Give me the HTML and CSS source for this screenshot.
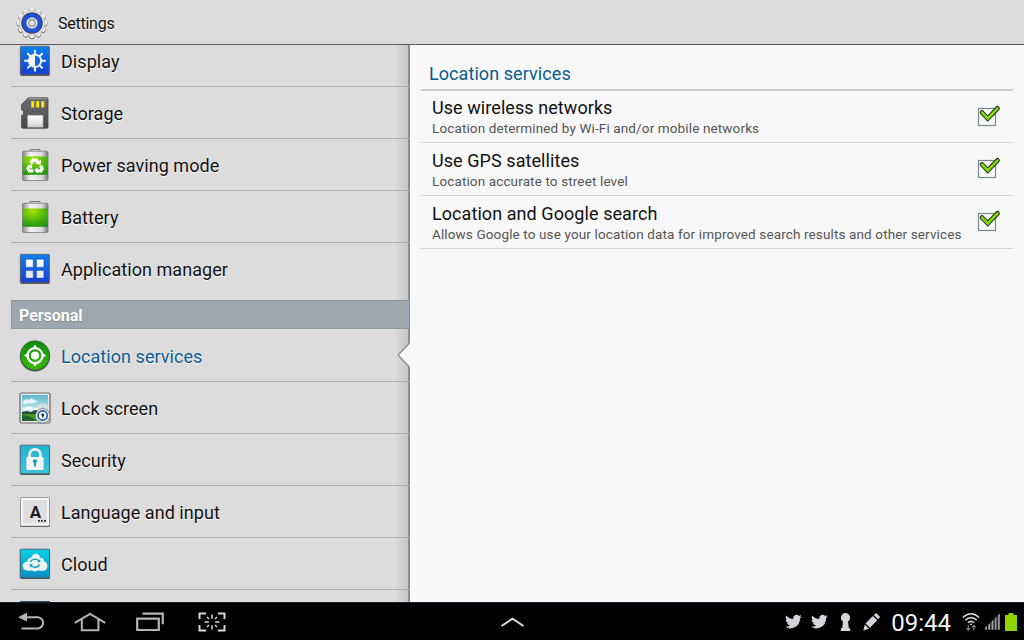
FILE: index.html
```html
<!DOCTYPE html>
<html lang="en">
<head>
    <meta charset="UTF-8">
    <meta name="viewport" content="width=device-width, initial-scale=1.0">
    <title>Settings</title>
    <link rel="stylesheet" href="styles.css">
</head>
<body>

    <!-- gradients shared by the icons -->
    <svg class="defs" width="0" height="0">
        <defs>
            <linearGradient id="blue" x1="0" y1="0" x2="0" y2="1"><stop offset="0" stop-color="#0a80ee"/><stop offset="1" stop-color="#1a3fd0"/></linearGradient>
            <linearGradient id="metal" x1="0" y1="0" x2="1" y2="0"><stop offset="0" stop-color="#8a8a8a"/><stop offset=".3" stop-color="#f4f4f4"/><stop offset=".75" stop-color="#dcdcdc"/><stop offset="1" stop-color="#7c7c7c"/></linearGradient>
            <radialGradient id="green" cx=".4" cy=".15" r="1"><stop offset="0" stop-color="#a2e400"/><stop offset=".6" stop-color="#3fae10"/><stop offset="1" stop-color="#1e8a12"/></radialGradient>
            <linearGradient id="greenball" x1="0" y1="0" x2="0" y2="1"><stop offset="0" stop-color="#0d8a0c"/><stop offset="1" stop-color="#35bf08"/></linearGradient>
            <linearGradient id="cyan" x1="0" y1="0" x2="0" y2="1"><stop offset="0" stop-color="#08cfe6"/><stop offset="1" stop-color="#0b8fc4"/></linearGradient>
            <linearGradient id="aqua" x1="0" y1="0" x2="0" y2="1"><stop offset="0" stop-color="#22b4d4"/><stop offset="1" stop-color="#3fc2dc"/></linearGradient>
            <linearGradient id="paper" x1="0" y1="0" x2="0" y2="1"><stop offset="0" stop-color="#ffffff"/><stop offset="1" stop-color="#d4d4d4"/></linearGradient>
            <linearGradient id="sky" x1="0" y1="0" x2="0" y2="1"><stop offset="0" stop-color="#5cb8cc"/><stop offset="1" stop-color="#d8f2f5"/></linearGradient>
            <linearGradient id="card" x1="0" y1="0" x2="0" y2="1"><stop offset="0" stop-color="#6e6e6e"/><stop offset="1" stop-color="#474747"/></linearGradient>
        </defs>
    </svg>

    <header class="topo">
        <svg class="gear" width="34" height="34" viewBox="0 0 34 34">
            <circle cx="17" cy="17.600" r="12.800" fill="none" stroke="#777" stroke-width="5.600" stroke-linecap="round" stroke-dasharray=".01 6.692" pathLength="80.424"/>
            <circle cx="17" cy="17" r="12.800" fill="none" stroke="#f4f4f4" stroke-width="4.800" stroke-linecap="round" stroke-dasharray=".01 6.692" pathLength="80.424"/>
            <circle cx="17" cy="17" r="12.600" fill="#ececec" stroke="#aaa" stroke-width=".6"/>
            <circle cx="17" cy="17" r="10.800" fill="#4a4e5c"/>
            <circle cx="17" cy="17" r="10" fill="#1b3fae"/>
            <circle cx="17" cy="17" r="7.600" fill="none" stroke="#1f52dc" stroke-width="3.600"/>
            <circle cx="17" cy="17" r="5.600" fill="#f2f2f2" stroke="#8b8f9c" stroke-width=".7"/>
            <circle cx="17" cy="17" r="3.300" fill="#e4e4e4" stroke="#888" stroke-width="1.200"/>
        </svg>
        <h1>Settings</h1>
    </header>

    <main class="principal">
        <nav class="menu">
            <ul class="lista">
                <li class="item">
                    <svg class="icone" viewBox="0 0 32 32">
                        <rect x="1.500" y="2" width="29" height="29" rx="1" fill="#555"/>
                        <rect x="1.300" y="1.300" width="29" height="28.400" rx=".8" fill="url(#blue)" stroke="#665f60" stroke-width=".8"/>
                        <g stroke="#f5f5f5" stroke-width="2" stroke-linecap="round"><path d="M16 5.800v20M6 15.800h20M8.900 8.700l14.200 14.200M23.100 8.700L8.900 22.900"/></g>
                        <circle cx="16" cy="15.800" r="7.100" fill="#f5f5f5"/>
                        <path d="M16 10.600a5.200 5.200 0 0 1 0 10.400z" fill="#1765dd"/>
                    </svg>
                    <span>Display</span>
                </li>
                <li class="item">
                    <svg class="icone" viewBox="0 0 32 32">
                        <path d="M9.500.8H28q1 0 1 1V30q0 1.200-1 1.200H4q-1.400 0-1.400-1.200V18.500l2-1.200v-3.200l-2-1.400V7.500z" fill="url(#card)" stroke="#444" stroke-width=".8"/>
                        <path d="M9.800 1.600H28" stroke="#aaa" stroke-width=".8"/>
                        <path d="M12.200 4.200h3v6.400h-3zM17.200 4.200h3v6.400h-3zM22.200 4.200h3v6.400h-3z" fill="#f5e414"/>
                        <path d="M8.500 30.300V19q0-.8.8-.8h14q.8 0 .8.8v11.300z" fill="url(#paper)" stroke="#999" stroke-width=".6"/>
                    </svg>
                    <span>Storage</span>
                </li>
                <li class="item">
                    <svg class="icone" viewBox="0 0 32 32">
                        <path d="M11 3.500V1.300q0-1 1-1h8q1 0 1 1v2.200" fill="#ddd" stroke="#6b6b6b"/>
                        <rect x="3.500" y="2.200" width="25.500" height="29.300" rx="1.500" fill="url(#metal)" stroke="#777" stroke-width=".8"/>
                        <rect x="3.800" y="7.500" width="24.900" height="18.300" fill="url(#green)"/>
                        <g fill="none" stroke="#fff" stroke-width="3.400"><path d="M11.800 14.500l2.200-3.400h3.400l1.700 2.700"/><path d="M21.600 16.500l1.600 3.100-1.500 2.300h-3.700"/><path d="M14.200 21.900h-3.700l-1.400-2.300 1.500-2.600"/></g>
                        <path d="M16.300 14.700l5.400 1.100.3-5zM18.600 18.300v6.200l-3.500-3zM8 17l4.500-1.700 1 4.400z" fill="#fff"/>
                    </svg>
                    <span>Power saving mode</span>
                </li>
                <li class="item">
                    <svg class="icone" viewBox="0 0 32 32">
                        <path d="M11 3.500V1.300q0-1 1-1h8q1 0 1 1v2.200" fill="#ddd" stroke="#6b6b6b"/>
                        <rect x="3.500" y="2.200" width="25.500" height="29.300" rx="1.500" fill="url(#metal)" stroke="#777" stroke-width=".8"/>
                        <rect x="3.800" y="7.500" width="24.900" height="18.300" fill="url(#green)"/>
                    </svg>
                    <span>Battery</span>
                </li>
                <li class="item ultimo">
                    <svg class="icone" viewBox="0 0 32 32">
                        <rect x="1.500" y="2" width="29" height="29" rx="1" fill="#555"/>
                        <rect x="1.300" y="1.300" width="29" height="28.400" rx=".8" fill="url(#blue)" stroke="#665f60" stroke-width=".8"/>
                        <g fill="#fff" stroke="#174fb5" stroke-width=".5"><path d="M6.800 6.300h7.400v7.900H6.800zM17.500 6.300h7.400v7.900h-7.400z"/><path fill="#e9e9e9" d="M6.800 17.400h7.400v7.700H6.800zM17.500 17.400h7.400v7.700h-7.400z"/></g>
                    </svg>
                    <span>Application manager</span>
                </li>
            </ul>

            <h2 class="grupo">Personal</h2>

            <ul class="lista">
                <li class="item ativo">
                    <svg class="icone" viewBox="0 0 32 32">
                        <circle cx="16" cy="16.200" r="15.200" fill="#4b5549"/>
                        <circle cx="16" cy="15.300" r="14.600" fill="url(#greenball)" stroke="#48664a" stroke-width=".7"/>
                        <circle cx="16" cy="15.600" r="7.500" fill="none" stroke="#fff" stroke-width="2.300"/>
                        <circle cx="16" cy="15.600" r="4.100" fill="#f7fff4"/>
                        <path d="M13 9l3-4.600L19 9zM13 22.200l3 4.600 3-4.600zM9.500 12.600l-4.600 3 4.600 3zM22.500 12.600l4.600 3-4.600 3z" fill="#fff"/>
                    </svg>
                    <span>Location services</span>
                    <svg class="seta" width="13" height="26" viewBox="0 0 13 26"><path d="M13 1L1.500 13 13 25z" fill="#f8f8f8"/><path d="M12 1.500L1.500 12.500q-.5.500 0 1L12 24.500" fill="none" stroke="#8b8b8b" stroke-width="1.200"/></svg>
                </li>
                <li class="item">
                    <svg class="icone" viewBox="0 0 32 32">
                        <rect x="1" y="1" width="30" height="30" rx="1.500" fill="#e8e8e8" stroke="#666" stroke-width="1.200"/>
                        <path d="M3 3h26v18H3z" fill="url(#sky)"/>
                        <path d="M4 9q3-3 6-1 2-3 5 0l4 1q-5 3-9 2-4 2-6 0zM4 16q6-3 12 0l6-1v3H4z" fill="#fff" opacity=".8"/>
                        <path d="M3 20l5-1 4 1 4-2 5 1 8-2v5H3z" fill="#214c38"/><path d="M3 22h26v7H3z" fill="#4a9625"/><path d="M3 23q9 0 14 6H3z" fill="#1f6429"/>
                        <path d="M19.500 20v-3q0-4 4-4t4 4v3" fill="none" stroke="#ddd" stroke-width="2.600"/>
                        <circle cx="23.700" cy="23.800" r="7.300" fill="#e0e0e0" stroke="#777" stroke-width=".8"/>
                        <circle cx="23.700" cy="23.500" r="4.600" fill="#fff" stroke="#1c62b4" stroke-width="1.600"/>
                        <circle cx="23.700" cy="23" r="1.400" fill="#222"/><path d="M23.200 23.500h1l.4 2h-1.800z" fill="#333"/>
                    </svg>
                    <span>Lock screen</span>
                </li>
                <li class="item">
                    <svg class="icone" viewBox="0 0 32 32">
                        <rect x="1.200" y="2" width="29.600" height="29" rx="1" fill="#48585e"/>
                        <rect x="1.200" y="1.200" width="29.400" height="28.600" rx=".8" fill="url(#aqua)" stroke="#53666c"/>
                        <path d="M10.500 14v-3.200a5.500 5.500 0 0 1 11 0V14" fill="none" stroke="#f4f4f4" stroke-width="2.800"/>
                        <rect x="7.400" y="13" width="17.200" height="13" rx="1" fill="#f3f3f3"/>
                        <circle cx="16" cy="17.300" r="2.100" fill="#189dbc"/><path d="M15 18h2v4.500h-2z" fill="#189dbc"/>
                    </svg>
                    <span>Security</span>
                </li>
                <li class="item">
                    <svg class="icone" viewBox="0 0 32 32">
                        <rect x="1.200" y="1.200" width="29.600" height="29.800" rx="1.500" fill="#666"/>
                        <rect x="1.800" y="1.800" width="28.400" height="27.900" rx="1" fill="#f7f7f7"/>
                        <rect x="4" y="4" width="24" height="23.500" fill="#dfdfdf"/>
                        <text class="letra" x="16.400" y="21.800" text-anchor="middle">A</text>
                        <path d="M19 24h1.800v1.800H19zM22 24h1.800v1.800H22zM25 24h1.800v1.800H25z" fill="#222"/>
                    </svg>
                    <span>Language and input</span>
                </li>
                <li class="item">
                    <svg class="icone" viewBox="0 0 32 32">
                        <rect x="1.200" y="2" width="29.600" height="29" rx="1" fill="#3f525a"/>
                        <rect x="1.200" y="1.200" width="29.400" height="28.600" rx=".8" fill="url(#cyan)" stroke="#466670"/>
                        <path d="M9 22.800q-5.300-.4-5.300-4.800 0-4 4.600-4.600.6-3.700 3.900-3.600 1.500-4 4.600-4t4.600 4q3.500.3 3.700 3.700 3.300.9 3.300 4.500 0 4.500-4.900 4.800-3 0-4-.5-3.500 2.200-7 0-1.500.5-3.500.5z" fill="#f1f4f5"/>
                        <g fill="none" stroke="#1ba5c8" stroke-width="1.500"><path d="M11.300 13.800q1.600-2.500 4.700-2.500 2.500 0 4 1.700M20.700 16.500q-1.600 2.700-4.700 2.700-2.500 0-4-1.800"/></g>
                        <path d="M21.300 11v3.300H18zM10.700 19.400v-3.300H14z" fill="#1ba5c8"/>
                    </svg>
                    <span>Cloud</span>
                </li>
                <li class="item">
                    <svg class="icone" viewBox="0 0 32 32"><rect x="1.200" y="1.200" width="29.600" height="29" fill="#0d2a33"/></svg>
                </li>
            </ul>
        </nav>

        <section class="painel">
            <h2 class="titulo">Location services</h2>
            <div class="opcao">
                <div class="texto">
                    <h3>Use wireless networks</h3>
                    <p>Location determined by Wi-Fi and/or mobile networks</p>
                </div>
                <svg class="check" width="24" height="22" viewBox="0 0 24 22"><rect x="1.500" y="3.500" width="17" height="17" fill="#fafafa" stroke="#78898f" stroke-width="1.200"/><path d="M5 7.500l5.700 6L20.500 3.300" fill="none" stroke="#17200d" stroke-width="4.600" stroke-linecap="round"/><path d="M5 7.500l5.700 6L20.500 3.300" fill="none" stroke="#80dc0c" stroke-width="2.600" stroke-linecap="round"/></svg>
            </div>
            <div class="opcao">
                <div class="texto">
                    <h3>Use GPS satellites</h3>
                    <p>Location accurate to street level</p>
                </div>
                <svg class="check" width="24" height="22" viewBox="0 0 24 22"><rect x="1.500" y="3.500" width="17" height="17" fill="#fafafa" stroke="#78898f" stroke-width="1.200"/><path d="M5 7.500l5.700 6L20.500 3.300" fill="none" stroke="#17200d" stroke-width="4.600" stroke-linecap="round"/><path d="M5 7.500l5.700 6L20.500 3.300" fill="none" stroke="#80dc0c" stroke-width="2.600" stroke-linecap="round"/></svg>
            </div>
            <div class="opcao">
                <div class="texto">
                    <h3>Location and Google search</h3>
                    <p>Allows Google to use your location data for improved search results and other services</p>
                </div>
                <svg class="check" width="24" height="22" viewBox="0 0 24 22"><rect x="1.500" y="3.500" width="17" height="17" fill="#fafafa" stroke="#78898f" stroke-width="1.200"/><path d="M5 7.500l5.700 6L20.500 3.300" fill="none" stroke="#17200d" stroke-width="4.600" stroke-linecap="round"/><path d="M5 7.500l5.700 6L20.500 3.300" fill="none" stroke="#80dc0c" stroke-width="2.600" stroke-linecap="round"/></svg>
            </div>
        </section>
    </main>

    <footer class="barra">
        <div class="botoes">
            <!-- back -->
            <svg width="26" height="20" viewBox="0 0 26 20"><path d="M7 5.200h12.500a5.200 5.200 0 0 1 0 11.200H3.500" fill="none" stroke="#b4b4b4" stroke-width="2"/><path d="M0 5.300L9 .5v9z" fill="#b4b4b4"/></svg>
            <!-- home -->
            <svg width="32" height="20" viewBox="0 0 32 20"><path d="M.8 10.800L16 1.800l15.200 9M7.800 7.500v10.700h16.600V7.500" fill="none" stroke="#b4b4b4" stroke-width="2"/></svg>
            <!-- recent apps -->
            <svg width="28" height="20" viewBox="0 0 28 20"><path d="M1.200 6.600h21.600v11.400H1.200zM6.500 1.700h20.300v10.600" fill="none" stroke="#b4b4b4" stroke-width="2.200"/></svg>
            <!-- screen capture -->
            <svg class="captura" width="28" height="20" viewBox="0 0 28 20"><path d="M1.500 7V1.500H8M20 1.500h6.500V7M1.500 13v5.500H8M20 18.500h6.500V13" fill="none" stroke="#d8d8d8" stroke-width="2"/><path d="M14 2.500v4.300M14 13.200v4.300M6.500 10h4.300M17.200 10h4.300M9 5l2 2M19 5l-2 2M9 15l2-2M19 15l-2-2" stroke="#d8d8d8" stroke-width="1.500"/></svg>
        </div>
        <svg class="sobe" width="24" height="10" viewBox="0 0 24 10"><path d="M1.500 9l11-7.300 11 7.300" fill="none" stroke="#e2e2e2" stroke-width="1.800"/></svg>
        <div class="status">
            <div class="avisos">
                <svg width="17" height="15" viewBox="0 0 24 21"><path d="M23.600 3.300a9 9 0 0 1-2.700.8A4.800 4.800 0 0 0 23 1.400a9 9 0 0 1-3.100 1.200 4.800 4.800 0 0 0-8.200 4.400A13.700 13.700 0 0 1 1.800 2a4.800 4.800 0 0 0 1.500 6.400 4.700 4.700 0 0 1-2.200-.6 4.800 4.800 0 0 0 3.900 4.800 5 5 0 0 1-2.200.1 4.800 4.800 0 0 0 4.500 3.300A9.700 9.700 0 0 1 .2 18a13.700 13.700 0 0 0 21-12.200 9.500 9.500 0 0 0 2.400-2.500z" fill="#d6d3da"/></svg>
                <svg width="17" height="15" viewBox="0 0 24 21"><path d="M23.600 3.300a9 9 0 0 1-2.700.8A4.800 4.800 0 0 0 23 1.400a9 9 0 0 1-3.100 1.200 4.800 4.800 0 0 0-8.200 4.400A13.700 13.700 0 0 1 1.800 2a4.800 4.800 0 0 0 1.500 6.400 4.700 4.700 0 0 1-2.200-.6 4.800 4.800 0 0 0 3.900 4.800 5 5 0 0 1-2.200.1 4.800 4.800 0 0 0 4.500 3.300A9.700 9.700 0 0 1 .2 18a13.700 13.700 0 0 0 21-12.200 9.500 9.500 0 0 0 2.400-2.500z" fill="#d6d3da"/></svg>
                <svg class="chave" width="11" height="18" viewBox="0 0 11 18"><circle cx="5.500" cy="4.700" r="4.600" fill="#d6d3da"/><path d="M3.200 7h4.600l1 8 1.400.6V18H.8v-2.400l1.400-.6z" fill="#d6d3da"/></svg>
                <svg class="lapis" width="17" height="18" viewBox="0 0 17 18"><path d="M2.500 10.500L9.800 3l4.500 4.300L7 14.800zM10.800 2L12.500.4q.6-.5 1.200 0l3 3q.5.600 0 1.200L15.200 6.300zM1.800 11.600L6 15.800.3 17.500z" fill="#d6d3da"/></svg>
            </div>
            <span class="hora">09:44</span>
            <div class="sinal">
                <svg width="18" height="19" viewBox="0 0 18 19"><path d="M.8 5.500q8.200-7.500 16.400 0M3.300 8.200q5.700-5 11.400 0M5.800 10.700q3.200-2.600 6.400 0" fill="none" stroke="#d4d4d4" stroke-width="1.600"/><path d="M7.200 11.800h3.600L9 13.600z" fill="#d4d4d4"/><path d="M6.300 13v5M4.300 16l2 2.200 2-2.200M11.800 18.500v-5M9.800 15.500l2-2.200 2 2.200" fill="none" stroke="#8a8a8a" stroke-width="1.100"/></svg>
                <svg width="15" height="17" viewBox="0 0 15 17"><path d="M.2 16.800v-2.200l1.800-1.800v4zM3.300 16.800v-5l2-2v7zM6.500 16.800V8.500l1.900-1.900v10.200z" fill="#a8a8a8"/><path d="M9.600 16.800V5.400l2-2v13.400zM12.700 16.800V2.400L14.800.2v16.600z" fill="#989898"/></svg>
                <svg width="12" height="18" viewBox="0 0 12 18"><path d="M3.500 0h5v2H12v16H0V2h3.500z" fill="#8fd400"/></svg>
            </div>
        </div>
    </footer>

</body>
</html>
```
FILE: styles.css
```css
@charset "utf-8";

*{
    padding: 0px;
    margin: 0px;
    box-sizing: border-box;
}
body{
    width: 1024px;
    height: 640px;
    display: flex;
    flex-direction: column;
    overflow: hidden;
    background-color: #dcdcdc;
    color: #111;
    font-family: Roboto, "Noto Sans", sans-serif;
}
svg{
    display: block;
    flex: none;
}
.defs{
    position: absolute;
}
.topo{
    flex: none;
    height: 45px;
    display: flex;
    align-items: center;
    gap: 9px;
    padding: 1px 0 0 15px;
    border-bottom: 1px solid #5c5c5c;
}
.topo h1{
    padding-top: 2px;
    font-size: 16px;
    font-weight: 400;
    letter-spacing: -.25px;
    text-shadow: 0 1px 1px white;
}
.principal{
    height: 557px;
    display: flex;
}

/* left list */
.menu{
    width: 410px;
    padding-left: 11px;
    overflow: hidden;
    background: linear-gradient(to right, rgba(0,0,0,0) 395px, rgba(0,0,0,.1) 408px, #8f8f8f 408px);
}
.lista{
    list-style: none;
}
.menu .lista:first-child{
    margin-top: -10px;
}
.item{
    height: 52px;
    display: flex;
    align-items: center;
    gap: 10px;
    padding-left: 8px;
    border-bottom: 1px solid #b0b0b0;
    font-size: 18px;
    letter-spacing: .05px;
    text-shadow: 0 1px 1px white;
}
.item span{
    padding-top: 1px;
}
.icone{
    width: 32px;
    height: 32px;
}
.ultimo{
    border-bottom-color: transparent;
}
.ativo{
    position: relative;
    color: #0b5c90;
}
.seta{
    position: absolute;
    right: 0;
    top: 12px;
}
.grupo{
    height: 29px;
    margin: 5px 1px 1px 0;
    padding-left: 7px;
    border: 1px solid #8d979c;
    border-right: 0;
    background-color: #9ea7ad;
    color: white;
    font-size: 16px;
    font-weight: 700;
    letter-spacing: -.05px;
    line-height: 29px;
    text-shadow: 0 1px 1px #7c868b;
}
.letra{
    font-size: 17px;
    font-weight: 700;
    letter-spacing: 0;
    fill: #1c1c1c;
    text-shadow: none;
}

/* right side */
.painel{
    flex: 1;
    padding: 11px 11px 0;
    background-color: #f8f8f8;
}
.titulo{
    height: 35px;
    padding-left: 8px;
    border-bottom: 2px solid #c4ced4;
    color: #0b5c90;
    font-size: 18px;
    font-weight: 400;
    letter-spacing: .07px;
    line-height: 35px;
}
.opcao{
    height: 53px;
    display: flex;
    align-items: center;
    justify-content: space-between;
    padding: 0 12px 0 11px;
    border-bottom: 1px solid #d5d5d5;
}
.opcao:nth-child(2){
    height: 52px;
}
.texto{
    padding-top: 2px;
}
.opcao h3{
    font-size: 18px;
    font-weight: 400;
    letter-spacing: .07px;
    line-height: 22px;
}
.opcao p{
    color: #555;
    font-size: 13.5px;
    letter-spacing: .13px;
    line-height: 19px;
    white-space: nowrap;
}
.check{
    margin-bottom: 2px;
}

/* system bar */
.barra{
    height: 38px;
    display: grid;
    grid-template-columns: 1fr 24px 1fr;
    align-items: center;
    background-color: black;
    border-top: 1px solid #14222e;
}
.botoes{
    display: flex;
    align-items: center;
    gap: 30px;
    padding-left: 18px;
}
.captura{
    margin-left: 4px;
}
.status{
    display: flex;
    align-items: center;
    justify-content: flex-end;
    gap: 11px;
    padding-right: 7px;
}
.avisos{
    display: flex;
    align-items: center;
    gap: 9px;
}
.chave{
    margin-left: 3px;
}
.lapis{
    margin-left: 3px;
}
.hora{
    color: #f4f4f4;
    font-size: 24px;
    line-height: 32px;
    padding-top: 2px;
}
.sinal{
    display: flex;
    align-items: center;
    gap: 5px;
}
```
